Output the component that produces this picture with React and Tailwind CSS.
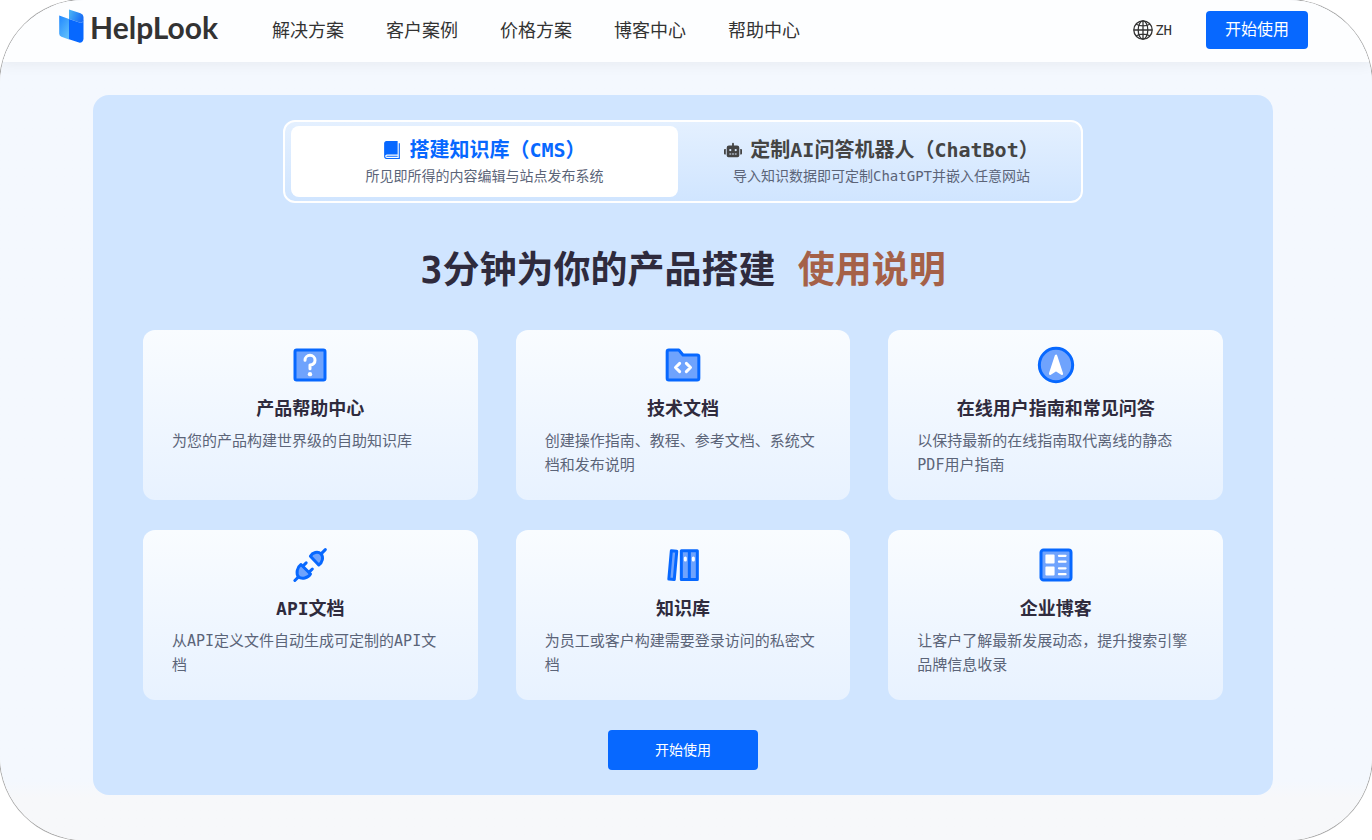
import React, { useState } from "react";
import { FaRobot } from "react-icons/fa";
import { ImBook } from "react-icons/im";

const navLinks = ["解决方案", "客户案例", "价格方案", "博客中心", "帮助中心"];

const tabs = [
  {
    id: "cms",
    icon: ImBook,
    title: "搭建知识库（CMS）",
    text: "所见即所得的内容编辑与站点发布系统",
  },
  {
    id: "chatbot",
    icon: FaRobot,
    title: "定制AI问答机器人（ChatBot）",
    text: "导入知识数据即可定制ChatGPT并嵌入任意网站",
  },
];

const CardIcon = ({ children }) => (
  <svg
    viewBox="0 0 48 48"
    className="size-10"
    fill="#6fa3fd"
    stroke="#0768ff"
    strokeWidth="3.6"
    strokeLinecap="round"
    strokeLinejoin="round"
    aria-hidden="true"
  >
    {children}
  </svg>
);

const QuestionIcon = () => (
  <CardIcon>
    <rect x="6" y="6" width="36" height="36" rx="2" />
    <path
      d="M18 18.2c0-3.2 2.700-5.800 6-5.800s6 2.600 6 5.800-2.700 5.400-6 5.800v4.500"
      fill="none"
      stroke="#fff"
    />
    <circle cx="24" cy="35" r="2.600" fill="#fff" stroke="none" />
  </CardIcon>
);

const FolderCodeIcon = () => (
  <CardIcon>
    <path d="M5 8a2 2 0 0 1 2-2h12l5 6h17a2 2 0 0 1 2 2v26a2 2 0 0 1-2 2H7a2 2 0 0 1-2-2V8z" />
    <path d="M20 22l-5 5 5 5M28 22l5 5-5 5" fill="none" stroke="#fff" />
  </CardIcon>
);

const NavigationIcon = () => (
  <CardIcon>
    <circle cx="24" cy="24" r="20" />
    <path
      d="M24 13l-7 21.500 7-4.500 7 4.500L24 13z"
      fill="#fff"
      stroke="#fff"
      strokeWidth="3"
    />
  </CardIcon>
);

const PlugIcon = () => (
  <CardIcon>
    <path d="M24.500 13.500L34.500 24c4.500-3 6-9.500 2.800-13.400-4-3.400-10.300-1.800-12.800 2.900z" />
    <path d="M37.600 10.400L42.400 5.600" />
    <path d="M13.200 23.400L24.600 34.800c-3 5-10.400 6.600-14.400 3.400-3.200-4-1.800-11.400 3-14.800z" />
    <path d="M10.200 38.200L5.800 42.600M15.600 25.200L19.400 21.400M23 32.600L26.800 28.800" />
  </CardIcon>
);

const BooksIcon = () => (
  <CardIcon>
    <path d="M10 7l6.500.6-3 33.900-6.500-.6z" />
    <path d="M22 7h9.600v34.500H22zM31.600 7h9.600v34.500h-9.600z" />
    <path d="M26.800 15.500v2.500M36.400 15.500v2.500" stroke="#fff" />
  </CardIcon>
);

const BlogIcon = () => (
  <CardIcon>
    <rect x="6" y="6" width="36" height="36" rx="3" />
    <path
      d="M12.300 12.300h9v9h-9zM12.300 26.700h9v9h-9z"
      fill="#fff"
      stroke="#fff"
      strokeWidth="2"
    />
    <path
      d="M27.500 13h8M27.500 20h8M27.500 28h8M27.500 35h8"
      stroke="#fff"
      strokeWidth="2.600"
    />
  </CardIcon>
);

const cards = [
  {
    icon: QuestionIcon,
    title: "产品帮助中心",
    text: "为您的产品构建世界级的自助知识库",
  },
  {
    icon: FolderCodeIcon,
    title: "技术文档",
    text: "创建操作指南、教程、参考文档、系统文档和发布说明",
  },
  {
    icon: NavigationIcon,
    title: "在线用户指南和常见问答",
    text: "以保持最新的在线指南取代离线的静态PDF用户指南",
  },
  {
    icon: PlugIcon,
    title: "API文档",
    text: "从API定义文件自动生成可定制的API文档",
  },
  {
    icon: BooksIcon,
    title: "知识库",
    text: "为员工或客户构建需要登录访问的私密文档",
  },
  {
    icon: BlogIcon,
    title: "企业博客",
    text: "让客户了解最新发展动态，提升搜索引擎品牌信息收录",
  },
];

const Logo = () => (
  <a href="#" className="flex items-start gap-1.5 pb-1.5">
    <svg viewBox="0 0 26 34" className="h-[34px] w-[26px]" aria-hidden="true">
      <defs>
        <linearGradient id="logoLeft" x1="0" y1="0" x2="0.6" y2="1">
          <stop offset="0" stopColor="#1f86ff" />
          <stop offset="1" stopColor="#5cbcfb" />
        </linearGradient>
        <linearGradient id="logoTop" x1="0" y1="0" x2="1" y2="0.4">
          <stop offset="0" stopColor="#4fb8f5" />
          <stop offset="1" stopColor="#1a6ff5" />
        </linearGradient>
      </defs>
      <path
        d="M1.200 6.500L11 10v20.500L3.400 27.700Q1.200 26.900 1.200 24.800z"
        fill="url(#logoLeft)"
      />
      <path
        d="M11 .5l11.500 3.800Q25.500 5.600 25.500 8v3.200q-.6 3-4 2.400L11 10z"
        fill="url(#logoTop)"
      />
      <path
        d="M11 10l10.500 3.600q3.400.6 4-2.400V30q-.6 4-4.500 3.600L11 30.300z"
        fill="#0768ff"
      />
    </svg>
    <span className="font-[Lato,sans-serif] text-[30px] leading-9 font-bold text-[#333]">
      HelpLook
    </span>
  </a>
);

const GlobeIcon = () => (
  <svg
    viewBox="0 0 20 20"
    className="size-5"
    fill="none"
    stroke="#333"
    strokeWidth="1.3"
    aria-hidden="true"
  >
    <circle cx="10" cy="10" r="9.2" />
    <ellipse cx="10" cy="10" rx="4.8" ry="9.2" />
    <path d="M10 .8v18.400M.8 10h18.400M3.200 4.200c3.800 2.200 9.800 2.200 13.600 0M3.200 15.800c3.800-2.200 9.800-2.200 13.600 0" />
  </svg>
);

const Header = () => (
  <header className="relative bg-[#fdfeff] pr-1.5 shadow-[0_2px_14px_rgba(0,0,0,0.06)]">
    <div className="mx-auto flex h-[62px] max-w-[1250px] items-center pb-0.5">
      <Logo />
      <nav className="mt-0.5 ml-[54px] flex gap-[42px] text-lg text-[#333]">
        {navLinks.map((link) => (
          <a key={link} href="#" className="whitespace-nowrap">
            {link}
          </a>
        ))}
      </nav>
      <button
        type="button"
        className="ml-auto flex items-center gap-0.5 text-sm text-[#333]"
      >
        <GlobeIcon />
        ZH
      </button>
      <button
        type="button"
        className="ml-[34px] h-[38px] rounded bg-[#0768ff] px-[19px] text-base whitespace-nowrap text-white"
      >
        开始使用
      </button>
    </div>
  </header>
);

const App = () => {
  const [activeTab, setActiveTab] = useState("cms");

  return (
    <div className="min-h-screen overflow-hidden bg-white font-['DejaVu_Sans_Mono','Noto_Sans_CJK_SC',monospace]">
      <div className="min-h-screen overflow-hidden rounded-[84px] bg-linear-to-b from-[#f4f8fe] from-93% to-[#f7f8fa] to-95% ring-1 ring-[#aaa]">
        <Header />
        <main className="pt-[33px] pr-1.5 pb-[45px]">
          <section className="mx-auto max-w-[1180px] rounded-2xl bg-[#d0e5ff] px-[50px] py-[25px]">
            <div
              role="tablist"
              className="mx-auto flex max-w-[800px] gap-2.5 rounded-xl border-2 border-white bg-linear-to-b from-[#e4f0ff] to-[#d0e5ff] px-1.5 py-1"
            >
              {tabs.map((tab) => (
                <button
                  key={tab.id}
                  type="button"
                  role="tab"
                  aria-selected={activeTab === tab.id}
                  onClick={() => setActiveTab(tab.id)}
                  className={`flex-1 rounded-lg pt-2.5 pb-[9px] ${
                    activeTab === tab.id
                      ? "bg-white text-[#0768ff]"
                      : "text-[#444]"
                  }`}
                >
                  <span className="flex items-center justify-center gap-2 text-xl leading-7 font-bold whitespace-nowrap">
                    <tab.icon className="size-[18px]" />
                    {tab.title}
                  </span>
                  <span className="block text-sm leading-6 whitespace-nowrap text-[#5b6478]">
                    {tab.text}
                  </span>
                </button>
              ))}
            </div>

            <h1 className="mt-[41px] text-center text-[37px] leading-[54px] font-bold text-[#2f2b3d]">
              3分钟为你的产品搭建{" "}
              <span className="text-[#a56148]">使用说明</span>
            </h1>

            <div className="mt-8 grid grid-cols-3 gap-x-[38px] gap-y-[30px]">
              {cards.map((card) => (
                <article
                  key={card.title}
                  className="flex min-h-[170px] flex-col items-center rounded-xl bg-linear-to-b from-[#f9fcff] to-[#e8f2ff] px-[29px] pt-[15px] pb-[15px]"
                >
                  <card.icon />
                  <h2 className="mt-[11px] text-lg leading-[26px] font-bold text-[#2f2b3d]">
                    {card.title}
                  </h2>
                  <p className="mt-[7px] w-full text-[15px] leading-6 text-[#5b6478]">
                    {card.text}
                  </p>
                </article>
              ))}
            </div>

            <button
              type="button"
              className="mx-auto mt-[30px] block h-10 w-[150px] rounded bg-[#0768ff] text-sm text-white"
            >
              开始使用
            </button>
          </section>
        </main>
      </div>
    </div>
  );
};

export default App;
